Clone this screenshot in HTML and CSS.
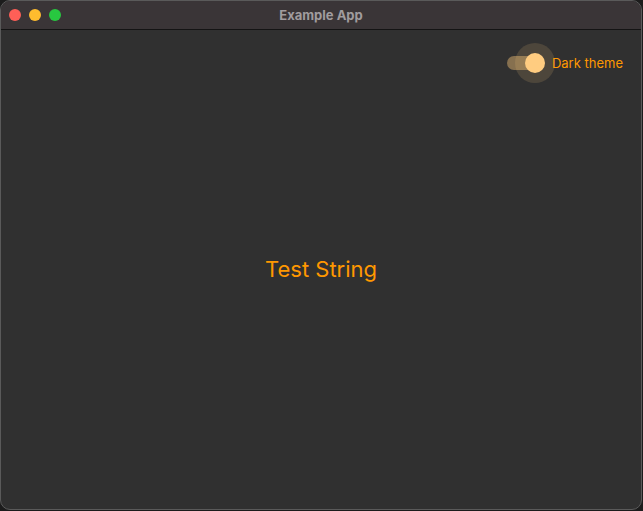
FILE: index.html
```html
<!DOCTYPE html>
<html lang="en">
<head>
  <meta charset="UTF-8" />
  <title>Example App</title>
  <link rel="stylesheet" href="styles.css">
</head>
<body>
  <div class="window">
    <div class="titlebar">
      <div class="lights">
        <span class="light red"></span>
        <span class="light yellow"></span>
        <span class="light green"></span>
      </div>
      <div class="title">Example App</div>
    </div>
    <div class="content">
      <div class="toolbar">
        <label class="switch">
          <span class="track"></span>
          <span class="halo"></span>
          <span class="thumb"></span>
        </label>
        <span class="switch-label">Dark theme</span>
      </div>
      <div class="center">Test String</div>
    </div>
  </div>
</body>
</html>
```

FILE: styles.css
```css
html, body {
  margin: 0;
  height: 100%;
}
body {
  background: #1c1c1c;
  font-family: Inter, 'Liberation Sans', sans-serif;
}
.window {
  height: 510px;
  width: 642px;
  box-sizing: border-box;
  border: 1px solid #5a5a5a;
  border-radius: 10px;
  overflow: hidden;
  background: #303030;
  display: flex;
  flex-direction: column;
}
.titlebar {
  height: 28px;
  background: #3a3537;
  border-bottom: 1px solid #141414;
  position: relative;
  display: flex;
  align-items: center;
  justify-content: center;
  flex-shrink: 0;
}
.lights {
  position: absolute;
  left: 8px;
  top: 8px;
  display: flex;
  gap: 8px;
}
.light {
  width: 12px;
  height: 12px;
  border-radius: 50%;
}
.red { background: #fe5f57; }
.yellow { background: #febc2e; }
.green { background: #28c840; }
.title {
  color: #a09c9e;
  font-size: 13px;
  font-weight: 700;
}
.content {
  flex: 1;
  display: flex;
  flex-direction: column;
}
.toolbar {
  display: flex;
  justify-content: flex-end;
  align-items: center;
  height: 22px;
  padding: 22px 18px 0 0;
}
.switch {
  position: relative;
  width: 38px;
  height: 20px;
  margin-right: 7px;
}
.track {
  position: absolute;
  left: 0;
  top: 3px;
  width: 34px;
  height: 14px;
  border-radius: 7px;
  background: #86704f;
}
.halo {
  position: absolute;
  left: 8px;
  top: -10px;
  width: 40px;
  height: 40px;
  border-radius: 50%;
  background: rgba(255, 204, 128, 0.14);
}
.thumb {
  position: absolute;
  left: 18px;
  top: 0;
  width: 20px;
  height: 20px;
  border-radius: 50%;
  background: #ffcc80;
}
.switch-label {
  color: #ff9800;
  font-size: 13px;
}
.center {
  flex: 1;
  display: flex;
  align-items: center;
  justify-content: center;
  color: #ff9800;
  font-size: 22px;
  padding-bottom: 46px;
}
```
